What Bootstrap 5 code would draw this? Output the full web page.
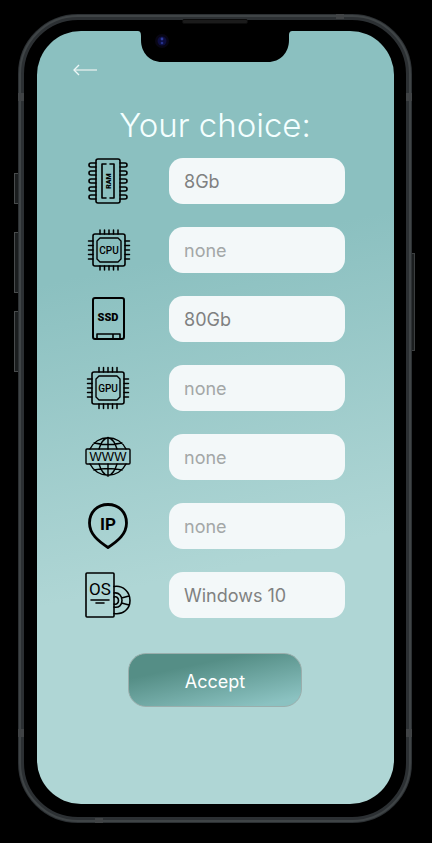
<!DOCTYPE html>
<html lang="en">
<head>
<meta charset="utf-8">
<meta name="viewport" content="width=device-width, initial-scale=1">
<title>Your choice</title>
<link href="https://cdn.jsdelivr.net/npm/bootstrap@5.3.0/dist/css/bootstrap.min.css" rel="stylesheet">
<style>
body { background: #000; font-family: Inter, "Liberation Sans", sans-serif; }
.phone { margin: 14px 20px 20px 18px; padding: 11px 12px 13px 13px; background: #000; border: 6px solid #2c3033; border-radius: 60px; outline: 2px solid #3f4446; outline-offset: -3px; }
.screen { min-height: 773px; padding: 32px 49px 96px 48px; border-radius: 44px; background: linear-gradient(168deg, #8bc0c0 30%, #afd6d5 68%); }
.notch { position: absolute; top: 0; left: 50%; margin-left: -79px; }
.speaker { position: absolute; top: -1px; left: 50%; width: 66px; height: 5px; margin-left: -33px; background: #1b1b1b; border: 1px solid #0c0c0c; border-radius: 2px; }
.side-key { position: absolute; left: -10px; width: 4px; background: #1b1e1f; border: 1px solid #484b4c; border-right: 0; }
.key-mute { top: 153px; height: 31px; }
.key-up { top: 212px; height: 61px; }
.key-down { top: 291px; height: 61px; }
.key-power { left: auto; right: -9px; top: 233px; height: 98px; width: 3px; border: 1px solid #3c3f40; border-left: 0; }
.band { position: absolute; width: 6px; height: 8px; background: #404345; }
.band-tl { left: -6px; top: 73px; } .band-tr { right: -6px; top: 73px; }
.band-bl { left: -6px; bottom: 80px; } .band-br { right: -6px; bottom: 80px; }
.band-top { right: 62px; top: -6px; width: 8px; height: 5px; }
.band-bot { left: 71px; bottom: -6px; width: 8px; height: 5px; }
.back-link { width: 26px; height: 14px; margin-left: -12px; }
.title { margin: 27px 0 12px; font-size: 33px; line-height: 42px; font-weight: 300; color: #f4ffff; }
.spec-list { gap: 23px; }
.spec-row { gap: 38px; }
.spec-icon { width: 46px; height: 46px; fill: none; stroke: #000; stroke-width: 1.6; stroke-linejoin: round; stroke-linecap: round; overflow: visible; }
.spec-icon text { fill: #000; stroke: none; text-anchor: middle; }
.form-control.spec-field { height: 46px; min-width: 0; padding: 0 15px; border: 0; border-radius: 14px; background: #f3f8f9; color: #7f8181; font-size: 18px; }
.form-control.spec-field::placeholder { color: #a3a7a7; }
.btn.accept { width: 174px; height: 54px; margin-top: 35px; padding: 8px 12px 6px; border: 1px solid #9aaeac; border-radius: 18px; background: linear-gradient(168deg, #558e86 28%, #8bc2c1 90%); color: #fff; font-size: 18px; }
</style>
</head>
<body>
<main class="phone position-relative">
  <i class="side-key key-mute"></i><i class="side-key key-up"></i><i class="side-key key-down"></i><i class="side-key key-power"></i>
  <i class="band band-tl"></i><i class="band band-tr"></i><i class="band band-bl"></i><i class="band band-br"></i><i class="band band-top"></i><i class="band band-bot"></i>
  <i class="speaker"></i>
  <div class="screen position-relative d-flex flex-column">
    <svg class="notch" width="156" height="31" viewBox="0 0 156 31" aria-hidden="true">
      <path d="M0 0C3 0 4 1 4 5V9C4 22 13 31 25 31H131C143 31 152 22 152 9V5C152 1 153 0 156 0Z" fill="#000"/>
      <circle cx="25" cy="10" r="7" fill="#080614"/><circle cx="25" cy="10" r="4.500" fill="#0d0e40"/><circle cx="25" cy="8" r="1.400" fill="#2f3c9c"/><circle cx="25" cy="12" r="1.300" fill="#26328a"/>
    </svg>
    <a href="#" class="back-link d-block" aria-label="Back">
      <svg class="d-block" width="26" height="14" viewBox="0 0 26 14" fill="none" stroke-linejoin="round"><path d="M1 7H24" stroke="#c5dedd" stroke-width="2"/><path d="M6 2L1 7L6 12" stroke="#edf7f7" stroke-width="1.4"/></svg>
    </a>
    <h1 class="title text-center text-nowrap">Your choice:</h1>
    <form class="d-flex flex-column">
      <div class="spec-list d-flex flex-column">
        <div class="spec-row d-flex align-items-center">
          <label for="ram" aria-label="RAM" class="flex-shrink-0 d-flex"><svg class="spec-icon" viewBox="0 0 46 46">
            <rect x="11" y="1" width="24" height="44" rx="2"/>
            <path d="M21 6H17V40H21M25 6H29V40H25"/>
            <path d="M11 5H6Q4 5 4 7T6 9H11M11 13H6Q4 13 4 15T6 17H11M11 21H6Q4 21 4 23T6 25H11M11 29H6Q4 29 4 31T6 33H11M11 37H6Q4 37 4 39T6 41H11M35 5H40Q42 5 42 7T40 9H35M35 13H40Q42 13 42 15T40 17H35M35 21H40Q42 21 42 23T40 25H35M35 29H40Q42 29 42 31T40 33H35M35 37H40Q42 37 42 39T40 41H35"/>
            <text transform="rotate(-90 23 23)" x="23" y="26" font-family="Roboto, sans-serif" font-size="7" font-weight="900">RAM</text></svg></label>
          <input id="ram" class="form-control spec-field flex-fill" type="text" value="8Gb">
        </div>
        <div class="spec-row d-flex align-items-center">
          <label for="cpu" aria-label="CPU" class="flex-shrink-0 d-flex"><svg class="spec-icon" viewBox="0 0 46 46">
            <rect x="8" y="7" width="32" height="32" rx="2"/><path d="M15 11H33L36 14V32L33 35H15L12 32V14Z" stroke-width="1.400"/>
            <path stroke-width="1.5" d="M15 7V3M19.500 7V3M24 7V3M28.500 7V3M33 7V3M15 39V43M19.500 39V43M24 39V43M28.500 39V43M33 39V43M8 14H3.500M8 18.500H3.500M8 23H3.500M8 27.500H3.500M8 32H3.500M40 14H44.500M40 18.500H44.500M40 23H44.500M40 27.500H44.500M40 32H44.500"/>
            <text x="24" y="27" font-family="Roboto, sans-serif" font-size="10" font-weight="500">CPU</text></svg></label>
          <input id="cpu" class="form-control spec-field flex-fill" type="text" placeholder="none">
        </div>
        <div class="spec-row d-flex align-items-center">
          <label for="ssd" aria-label="SSD" class="flex-shrink-0 d-flex"><svg class="spec-icon" viewBox="0 0 46 46">
            <rect x="8" y="2" width="31" height="41" rx="2" stroke-width="2"/><path d="M12 42V38H35V42M28 38V42"/>
            <text x="23" y="25" font-family="Roboto, sans-serif" font-size="11" font-weight="900">SSD</text></svg></label>
          <input id="ssd" class="form-control spec-field flex-fill" type="text" value="80Gb">
        </div>
        <div class="spec-row d-flex align-items-center">
          <label for="gpu" aria-label="GPU" class="flex-shrink-0 d-flex"><svg class="spec-icon" viewBox="0 0 46 46">
            <rect x="7" y="7" width="32" height="32" rx="2"/><path d="M14 11H32L35 14V32L32 35H14L11 32V14Z" stroke-width="1.400"/>
            <path stroke-width="1.5" d="M14 7V2.500M18.500 7V2.500M23 7V2.500M27.500 7V2.500M32 7V2.500M14 39V43.500M18.500 39V43.500M23 39V43.500M27.500 39V43.500M32 39V43.500M7 14H2.500M7 18.500H2.500M7 23H2.500M7 27.500H2.500M7 32H2.500M39 14H43.500M39 18.500H43.500M39 23H43.500M39 27.500H43.500M39 32H43.500"/>
            <text x="23" y="27" font-family="Roboto, sans-serif" font-size="10" font-weight="500">GPU</text></svg></label>
          <input id="gpu" class="form-control spec-field flex-fill" type="text" placeholder="none">
        </div>
        <div class="spec-row d-flex align-items-center">
          <label for="www" aria-label="WWW" class="flex-shrink-0 d-flex"><svg class="spec-icon" viewBox="0 0 46 46">
            <g stroke-width="1.400"><rect x="1" y="15" width="44" height="15" rx="1"/>
            <path d="M5 15A20 20 0 0 1 41 15M5 30A20 20 0 0 0 41 30M14 15Q17 5 23 3.500Q29 5 32 15M14 30Q17 40 23 42Q29 40 32 30M23 3.500V15M23 30V42M9 9Q23 12 37 9M9 36Q23 33 37 36"/></g>
            <text x="23" y="27" font-family="Liberation Sans, sans-serif" font-size="13">WWW</text></svg></label>
          <input id="www" class="form-control spec-field flex-fill" type="text" placeholder="none">
        </div>
        <div class="spec-row d-flex align-items-center">
          <label for="ip" aria-label="IP" class="flex-shrink-0 d-flex"><svg class="spec-icon" viewBox="0 0 46 46">
            <path d="M23 1.500C12 1.500 4.500 9.500 4.500 20C4.500 31 13 38 23 44.500C33 38 41.500 31 41.500 20C41.500 9.500 34 1.500 23 1.500Z" stroke-width="2.800"/>
            <text x="23" y="27" font-family="Roboto, sans-serif" font-size="17" font-weight="700">IP</text></svg></label>
          <input id="ip" class="form-control spec-field flex-fill" type="text" placeholder="none">
        </div>
        <div class="spec-row d-flex align-items-center">
          <label for="os" aria-label="OS" class="flex-shrink-0 d-flex"><svg class="spec-icon" viewBox="0 0 46 46">
            <rect x="1" y="1" width="28" height="44" rx="1"/><path d="M6 28H24M11 31H19"/>
            <path d="M29 14.500C38 13 45 20 45 28.500S38 43 29 41.500M29 21C34 20 37 24 37 28.500S34 36 29 35M29 25C32 24 33.500 26.500 33.500 28.500S32 33 29 32M36.500 26L44 24M36.500 31L44 33"/>
            <text x="15" y="23" font-family="Roboto, sans-serif" font-size="17">OS</text></svg></label>
          <input id="os" class="form-control spec-field flex-fill" type="text" value="Windows 10">
        </div>
      </div>
      <button type="button" class="btn accept align-self-center">Accept</button>
    </form>
  </div>
</main>
<script src="https://cdn.jsdelivr.net/npm/bootstrap@5.3.0/dist/js/bootstrap.bundle.min.js"></script>
</body>
</html>
